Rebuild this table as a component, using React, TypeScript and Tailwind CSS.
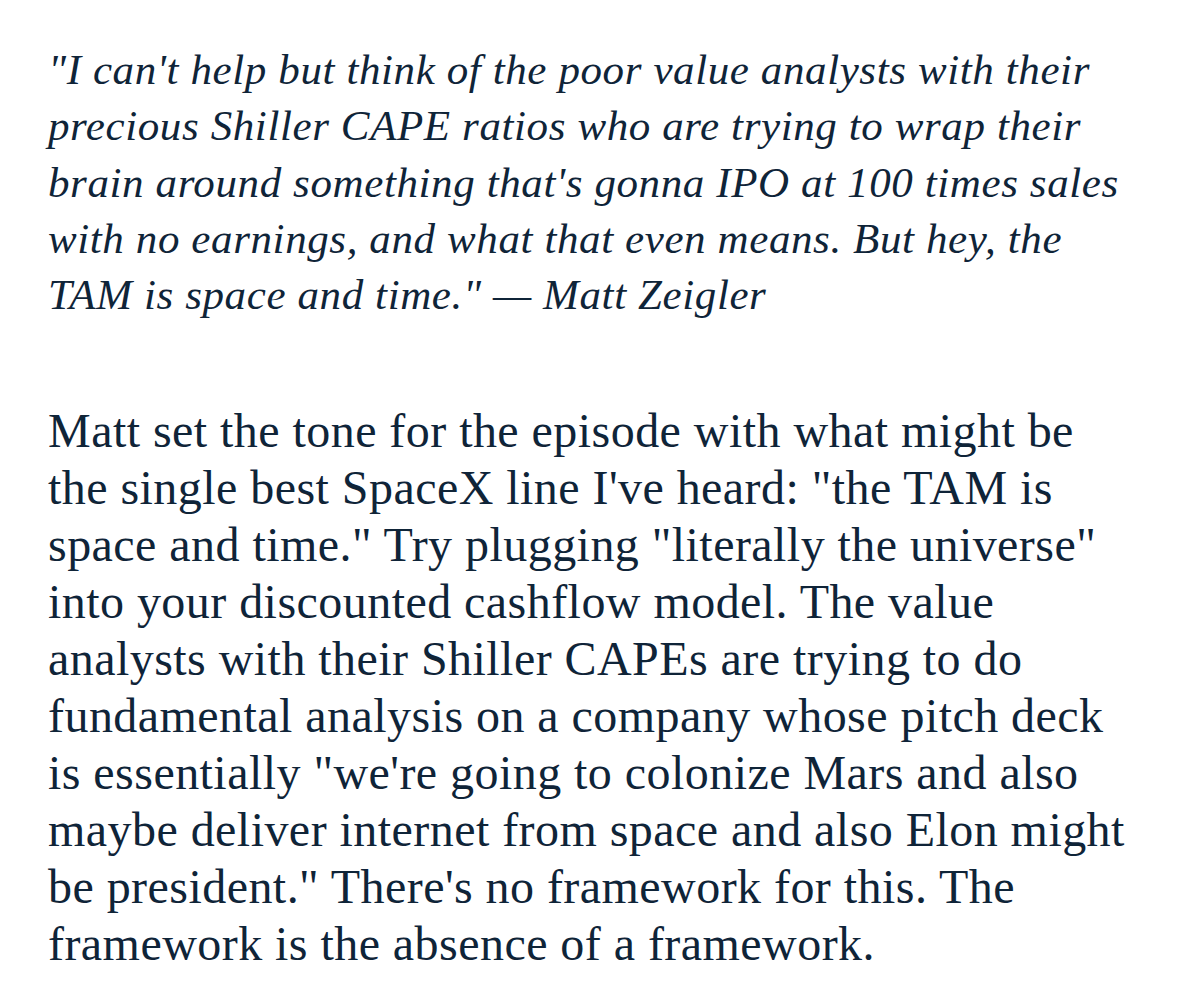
const quoteLines = [
  `"I can't help but think of the poor value analysts with their`,
  `precious Shiller CAPE ratios who are trying to wrap their`,
  `brain around something that's gonna IPO at 100 times sales`,
  `with no earnings, and what that even means. But hey, the`,
  `TAM is space and time." — Matt Zeigler`,
];

const bodyLines = [
  `Matt set the tone for the episode with what might be`,
  `the single best SpaceX line I've heard: "the TAM is`,
  `space and time." Try plugging "literally the universe"`,
  `into your discounted cashflow model. The value`,
  `analysts with their Shiller CAPEs are trying to do`,
  `fundamental analysis on a company whose pitch deck`,
  `is essentially "we're going to colonize Mars and also`,
  `maybe deliver internet from space and also Elon might`,
  `be president." There's no framework for this. The`,
  `framework is the absence of a framework.`,
];

export default function App() {
  return (
    <div className="min-h-screen w-[1189px] bg-white pl-[48px] pt-[42px] text-[#0f2438] font-['Liberation_Serif',serif]">
      <blockquote className="text-[43px] italic leading-[56.25px] tracking-[0.6px]">
        {quoteLines.map((line) => (
          <span key={line} className="block whitespace-nowrap">
            {line}
          </span>
        ))}
      </blockquote>
      <div className="mt-[79px] text-[48px] leading-[57px] tracking-[0.45px]">
        {bodyLines.map((line) => (
          <span key={line} className="block whitespace-nowrap">
            {line}
          </span>
        ))}
      </div>
    </div>
  );
}
